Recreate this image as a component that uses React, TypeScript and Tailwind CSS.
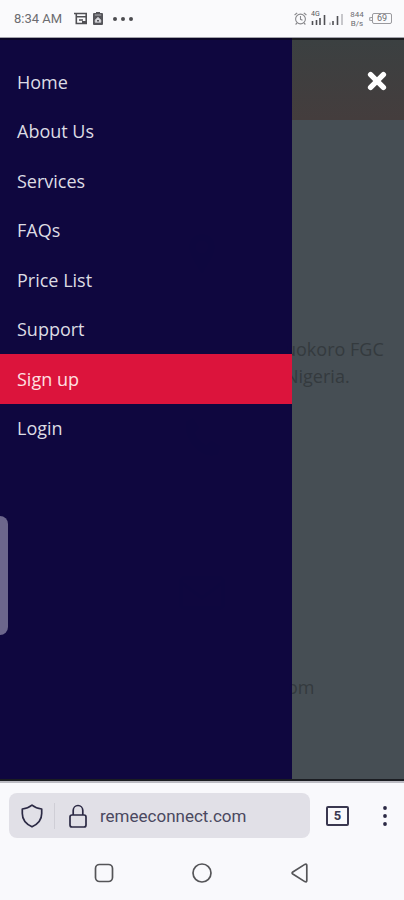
import React from 'react';

const links = ['Home', 'About Us', 'Services', 'FAQs', 'Price List', 'Support', 'Sign up', 'Login'];

function StatusBar() {
  return (
    <header className="flex h-[38px] shrink-0 items-center border-b border-[#a3a3ab] bg-[#fafafc] pl-[14px] pr-3 font-['Roboto',sans-serif] text-[#6c6c70]">
      <span className="text-[13px] leading-4">8:34 AM</span>
      <svg className="ml-3 h-[13px] w-[13px]" viewBox="0 0 13 13" fill="none" stroke="#505054" strokeWidth="1.6">
        <path d="M0 1.5h12.2v10H2.3V1.5M2.3 4.7h9.9M5 8h4" />
        <path d="M8 11.5V9h4v2.5z" fill="#505054" stroke="none" />
      </svg>
      <svg className="ml-1.5 h-[13px] w-[10px]" viewBox="0 0 10 13">
        <path d="M3 0h4v1h2q1 0 1 1v10q0 1-1 1H1q-1 0-1-1V2q0-1 1-1h2z" fill="#55555a" />
        <path d="M1.8 3h6.4M5 5.2 2.2 8v2.3h5.6V8z" fill="#d8d8dc" stroke="#d8d8dc" strokeWidth=".7" />
        <path d="M4 8h2v1.5H4z" fill="#55555a" />
      </svg>
      <svg className="ml-2.5 h-1 w-5" viewBox="0 0 20 4" fill="#4c4c50">
        <circle cx="2" cy="2" r="2" /><circle cx="10" cy="2" r="2" /><circle cx="18" cy="2" r="2" />
      </svg>
      <div className="ml-auto flex items-center">
        <svg className="h-[13px] w-[13px]" viewBox="0 0 13 13" fill="none" stroke="#88888c" strokeWidth="1.1">
          <circle cx="6.5" cy="7" r="4.9" /><path d="M6.5 4v3.3l2 1M.6 3 3.2.8M12.4 3 9.8.8M3 11l-1.4 1.5M10 11l1.4 1.5" />
        </svg>
        <svg className="ml-1 h-[15px] w-8" viewBox="0 0 32 15" stroke="#505054" strokeWidth="1.6">
          <path d="M1.5 10v4M5.5 9v5M9 7v7M13.5 4v10M22 10v4M26.5 5v9" />
          <path d="M19 11.5V14M31 3v11" stroke="#bbbbbf" />
          <text x="0" y="5" fontSize="7" fill="#555559" stroke="none">4G</text>
        </svg>
        <div className="ml-1.5 w-4 text-center text-[8px] leading-[9px]">
          <p>844</p><p>B/s</p>
        </div>
        <div className="ml-1 h-1 w-[3px] rounded-l-xs border border-r-0 border-[#9a9a9e]" />
        <div className="flex h-[11px] w-5 items-center justify-center rounded-xs border border-[#9a9a9e] text-[9px] leading-[9px]">69</div>
      </div>
    </header>
  );
}

function Contact() {
  return (
    <div className="flex h-full flex-col font-['Open_Sans',sans-serif] text-[18px] leading-[27px] text-[#343a3e]">
      <div className="h-[82px] shrink-0 border-t-2 border-[#1c1d20] bg-linear-to-b from-[#3b4041] to-[#443d3d]" />
      <svg className="mx-auto mt-[114px] h-10 w-10 shrink-0" viewBox="0 0 40 40" fill="currentColor">
        <path fillRule="evenodd" d="M20 0C12 0 7 6 7 13c0 9 13 27 13 27s13-18 13-27C33 6 28 0 20 0zm0 7a6 6 0 1 1 0 12 6 6 0 0 1 0-12z" />
      </svg>
      <div className="mt-[62px] pl-[285px]">
        <p className="whitespace-nowrap">uokoro FGC</p>
        <p>Nigeria.</p>
      </div>
      <svg className="mx-auto mt-[28px] h-10 w-10 shrink-0" viewBox="0 0 40 40" fill="currentColor">
        <path d="M4 3 11 0l7 10-5 5c2 5 6 9 11 12l5-5 10 6-3 9C19 42 0 22 4 3z" />
      </svg>
      <svg className="mx-auto mt-[118px] h-[34px] w-[46px] shrink-0" viewBox="0 0 46 34" fill="none" stroke="currentColor" strokeWidth="4">
        <rect x="2" y="2" width="42" height="30" rx="3" /><path d="m3 7 20 15L43 7" />
      </svg>
      <p className="mt-16 pl-[287px]">om</p>
    </div>
  );
}

function BrowserBar() {
  return (
    <footer className="shrink-0 border-t-2 border-[#bcbcc3] bg-[#f9f9fc]">
      <div className="flex items-center pl-[9px] pr-[11px] pt-[10px]">
        <div className="flex h-[45px] min-w-0 flex-1 items-center rounded-lg bg-[#e1e0e7] pl-3 text-[#2b2944]">
          <svg className="h-6 w-[22px] shrink-0" viewBox="0 0 22 24" fill="none" stroke="currentColor" strokeWidth="1.7" strokeLinejoin="round">
            <path d="M11 1.2Q15 4.5 20.7 5v4.5c0 6.5-4.7 11-9.7 13.3C6 20.5 1.3 16 1.3 9.5V5Q7 4.5 11 1.2z" />
          </svg>
          <span className="ml-[11px] h-[26px] w-px shrink-0 bg-[#cfced6]" />
          <svg className="ml-[14px] h-6 w-[18px] shrink-0" viewBox="0 0 18 24" fill="none" stroke="currentColor" strokeWidth="1.7">
            <rect x="1" y="11" width="16" height="12" rx="2" /><path d="M4.2 11V6.5a4.8 5 0 0 1 9.6 0V11" />
          </svg>
          <input aria-label="Address" readOnly value="remeeconnect.com" className="ml-[13px] min-w-0 flex-1 bg-transparent font-['Roboto',sans-serif] text-[17px] leading-6 text-[#4a4860] outline-none" />
        </div>
        <button aria-label="Tabs" className="ml-4 flex h-5 w-[23px] items-center justify-center rounded-xs border-2 border-[#3a3850] font-['Roboto',sans-serif] text-[13px] font-bold leading-4 text-[#3a3850]">5</button>
        <button aria-label="More" className="ml-7 flex w-4 justify-center">
          <svg className="h-5 w-1" viewBox="0 0 4 20" fill="#2b2944"><circle cx="2" cy="2" r="1.9" /><circle cx="2" cy="10" r="1.9" /><circle cx="2" cy="18" r="1.9" /></svg>
        </button>
      </div>
      <nav aria-label="System" className="flex h-[62px] items-center justify-center gap-[78px] pt-2 text-[#555558]">
        <button aria-label="Recent">
          <svg className="h-5 w-5" viewBox="0 0 20 20" fill="none" stroke="currentColor" strokeWidth="1.7"><rect x="1.5" y="1.5" width="17" height="17" rx="4" /></svg>
        </button>
        <button aria-label="Home screen">
          <svg className="h-5 w-5" viewBox="0 0 20 20" fill="none" stroke="currentColor" strokeWidth="1.7"><circle cx="10" cy="10" r="9" /></svg>
        </button>
        <button aria-label="Back">
          <svg className="h-5 w-5" viewBox="0 0 20 20" fill="none" stroke="currentColor" strokeWidth="1.7" strokeLinejoin="round"><path d="M2.8 9q-1.4 1 0 2l12 7.6q2 1 2-1V2.4q0-2-2-1z" /></svg>
        </button>
      </nav>
    </footer>
  );
}

export default function App() {
  return (
    <div className="flex min-h-screen flex-col bg-[#f9f9fc]">
      <StatusBar />
      <main className="relative flex-1 overflow-hidden border-b-2 border-[#1b1d22] bg-[#464e54]">
        <Contact />
        <nav aria-label="Main" className="absolute inset-y-0 left-0 w-[292px] border-t-2 border-[#0a0526] bg-[#0d053f]/97 pt-[17px]">
          <ul className="grid h-[396px] grid-rows-8 font-['Open_Sans',sans-serif] text-[18px] leading-6 text-[#dddce4]">
            {links.map((label) => (
              <li key={label} className="flex">
                <a href="#" className={label === 'Sign up' ? 'flex flex-1 items-center bg-[#dc143c] pl-[17px] text-[#ffe0e2]' : 'flex flex-1 items-center pl-[17px]'}>{label}</a>
              </li>
            ))}
          </ul>
        </nav>
        <button aria-label="Close menu" className="absolute right-[17px] top-[33px]">
          <svg className="h-5 w-5" viewBox="0 0 20 20" fill="none" stroke="white" strokeWidth="5.4" strokeLinecap="round"><path d="m3.6 3.6 12.8 12.8M16.4 3.6 3.6 16.4" /></svg>
        </button>
        <div className="absolute left-0 top-[478px] h-[119px] w-2 rounded-r-lg bg-[#6c668c]" />
      </main>
      <BrowserBar />
    </div>
  );
}
